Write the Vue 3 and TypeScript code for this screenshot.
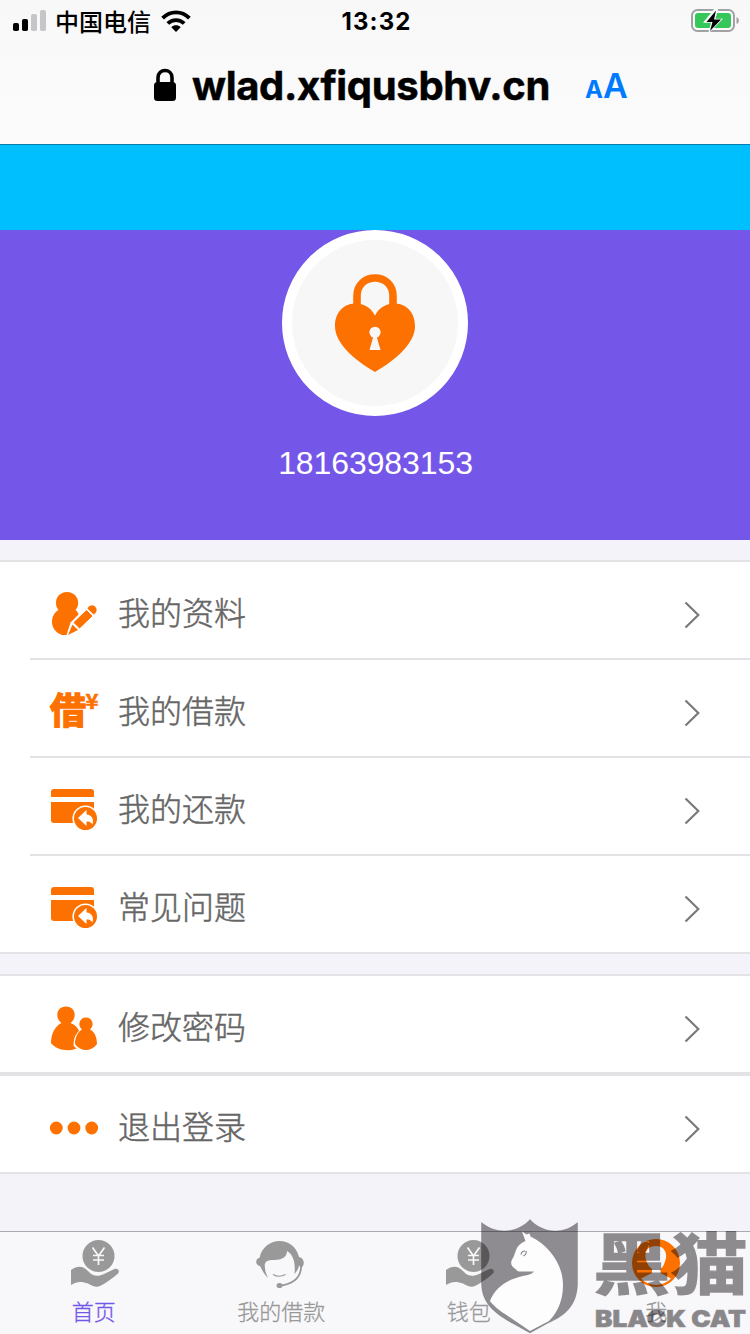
<script setup lang="ts">
interface Row {
  label: string
  icon: 'profile' | 'loan' | 'card' | 'people' | 'dots'
}

interface Tab {
  label: string
  icon: 'hand' | 'service' | 'me'
  active?: boolean
}

const mainRows: Row[] = [
  { label: '我的资料', icon: 'profile' },
  { label: '我的借款', icon: 'loan' },
  { label: '我的还款', icon: 'card' },
  { label: '常见问题', icon: 'card' },
]

const accountRows: Row[] = [
  { label: '修改密码', icon: 'people' },
  { label: '退出登录', icon: 'dots' },
]

const groups: { name: string; rows: Row[] }[] = [
  { name: 'main', rows: mainRows },
  { name: 'account', rows: accountRows },
]

const tabs: Tab[] = [
  { label: '首页', icon: 'hand', active: true },
  { label: '我的借款', icon: 'service' },
  { label: '钱包', icon: 'hand' },
  { label: '我', icon: 'me' },
]
</script>

<template>
  <div class="screen">
    <header class="browser">
      <div class="status">
        <div class="carrier">
          <svg class="signal" width="34" height="22" viewBox="0 0 34 22">
            <rect x="0" y="13" width="6" height="8" rx="1.8" />
            <rect x="9" y="9" width="6" height="12" rx="1.8" />
            <rect x="18" y="4" width="6" height="17" rx="1.8" fill="#c6c6c8" />
            <rect x="27" y="0" width="6" height="21" rx="1.8" fill="#c6c6c8" />
          </svg>
          <span class="carrier-name">中国电信</span>
          <svg class="wifi" width="30" height="22" viewBox="0 0 30 22">
            <g fill="none" stroke="#000" stroke-width="3.8">
              <path d="M1.6 8.2C9.2.4 20.8.4 28.4 8.2" />
              <path d="M6.800 13.500C11.500 9 18.500 9 23.200 13.500" />
            </g>
            <path d="M10.300 17.200C13 14.700 17 14.700 19.700 17.200L15 22Z" />
          </svg>
        </div>
        <span class="clock">13:32</span>
        <svg class="battery" width="50" height="26" viewBox="0 0 50 26">
          <rect x="2" y="2" width="42" height="21" rx="5.500" fill="#fbfbfb" stroke="#a2a2a4" stroke-width="2" />
          <rect x="5" y="5" width="36" height="15" rx="3" fill="#35c759" />
          <path d="M46.500 9Q49 10 49 12.500T46.500 16Z" fill="#a2a2a4" />
          <path d="M25 0 13 14.800H21L18 26 33 10.800H25.500L28.500 0Z" fill="#fbfbfb" />
          <path d="M26 2.500 16.500 14H22.500L20 23 31 11.500H24Z" />
        </svg>
      </div>
      <div class="address">
        <svg class="padlock" width="24" height="34" viewBox="0 0 24 34">
          <rect x="1" y="14" width="22" height="19" rx="3.500" />
          <path d="M5 16V9.500C5 .2 19 .2 19 9.500V16" fill="none" stroke="#000" stroke-width="3.600" />
        </svg>
        <span class="domain">wlad.xfiqusbhv.cn</span>
        <span class="reader"><small>A</small><b>A</b></span>
      </div>
    </header>

    <div class="title-bar"></div>

    <section class="hero">
      <div class="avatar">
        <svg width="80" height="100" viewBox="0 0 80 100">
          <path d="M22 36V22C22-2 58-2 58 22V36" fill="none" stroke="#fd7100" stroke-width="7.600" />
          <path d="M40 41.500C35 32 27 29.500 20 29.500C7 30 0 40 0 52C0 69 18 85 40 98C62 85 80 69 80 52C80 40 73 30 60 29.500C53 29.500 45 32 40 41.500Z" fill="#fd7100" />
          <circle cx="40" cy="58.300" r="5.600" fill="#f7f7f7" />
          <path d="M38.800 61H41.200L45.500 76H34.500Z" fill="#f7f7f7" />
        </svg>
      </div>
      <p class="phone">18163983153</p>
    </section>

    <main>
      <ul v-for="group in groups" :key="group.name" class="group" :class="group.name">
        <li v-for="row in group.rows" :key="row.label" class="row">
          <svg class="row-icon" width="48" height="48" viewBox="0 0 48 48" fill="#fd7100">
            <g v-if="row.icon === 'profile'">
              <path d="M17 2C24 2 28.200 7 28.200 13C28.200 16 27 18 25.500 20C27 21 28 22.500 28.500 24.500L20.500 32.500L16.500 45H12C6 43 2 38 2 32C2 26 5 22 8.500 20C7 18 6 16 6 13C6 7 10 2 17 2Z" />
              <path d="M24 32.500 36.500 20.500 42 26 29.500 38Z" stroke="#fd7100" stroke-width="1" />
              <path d="M37.500 18.500A4.700 4.700 0 1 1 43.500 24.500Z" />
              <path d="M22.500 34.500 28 40 18 45Z" />
            </g>
            <g v-else-if="row.icon === 'loan'" class="loan-mark">
              <text transform="translate(0 35.500) scale(1 .95)" font-size="38" textLength="36" lengthAdjust="spacingAndGlyphs" stroke="#fd7100" stroke-width="1.600">借</text>
              <text x="35.500" y="20.500" font-size="21" textLength="13" lengthAdjust="spacingAndGlyphs" stroke="#fd7100" stroke-width=".5">¥</text>
            </g>
            <g v-else-if="row.icon === 'card'">
              <path d="M4 3H41Q44 3 44 6V11H1V6Q1 3 4 3Z" />
              <path d="M1 16H44V37H4Q1 37 1 34Z" />
              <circle cx="35.500" cy="32.500" r="12.300" stroke="#fff" stroke-width="1.600" />
              <path d="M28 32 36.500 24V28.500C42 29 44 33 42.500 38.500C41 36 39 35.500 36.500 35.500V40Z" fill="#fff" />
            </g>
            <g v-else-if="row.icon === 'people'">
              <path d="M1 39C1 30 5 22 11.500 19C4.500 14 6.500 2.500 16 2.500C25.500 2.500 27.500 14 20.500 19C29 22 32 31 31 42C24 48 8 48 1 39Z" />
              <path d="M25 41C25 33 28 29 32 26.500C26 22 30 13.500 36 13.500C42 13.500 45 22 40 26.500C45 29 47 34 47 40C41 48 31 48 25 41Z" stroke="#fff" stroke-width="3" />
              <path d="M25 40C25 33 28 28 32 25.500C27 21.500 29.500 13.500 36 13.500C42.500 13.500 45 21.500 40 25.500C45 28 47 34 47 40C41 48 31 48 25 40Z" />
            </g>
            <g v-else>
              <circle cx="6.300" cy="24" r="6.400" /><circle cx="24" cy="24" r="6.400" /><circle cx="41.700" cy="24" r="6.400" />
            </g>
          </svg>
          <span class="row-label">{{ row.label }}</span>
          <svg class="chevron" width="18" height="28" viewBox="0 0 18 28">
            <path d="M2.500 1.500 15.300 14 2.500 26.500" fill="none" stroke="#7a7a7a" stroke-width="2.200" />
          </svg>
        </li>
      </ul>
    </main>

    <nav class="tabs">
      <div v-for="tab in tabs" :key="tab.label" class="tab" :class="{ active: tab.active }">
        <svg class="tab-icon" :class="tab.icon" width="48" height="48" viewBox="0 0 48 48" fill="#999">
          <g v-if="tab.icon === 'hand'">
            <circle cx="27.500" cy="16" r="16" />
            <path d="M21.500 7.500 27.500 16 33.500 7.500M27.500 16V25M22 15.500H33M22 20H33" fill="none" stroke="#f8f8fb" stroke-width="1.700" />
            <path d="M0 30C7 25 12 26 17 31C22 36.500 27 37 33 34L43 29.200C46 27.500 49.500 30.500 47 33.500C42 38 35 43 29 46C25 48 21 45.500 17 43.500C11 41.500 6 41 0 45Z" />
          </g>
          <g v-else-if="tab.icon === 'service'">
            <path d="M3.500 18C8-4 38-5 43 17C49 18 49 26 45 28L43 25.500C42.500 28.500 41 31 38.500 34C39.500 24 38 15 31 11C31 17 26 20 18 20C10 20 8 22 9 28C9 32 11 35 12 38C8 34 6 30 4 26C-1 26-1 18 3.500 18Z" />
            <path d="M45 24C46 37 38 44 23 46" fill="none" stroke="#999" stroke-width="1.800" />
            <ellipse cx="23.500" cy="45.500" rx="3" ry="2.600" />
            <path d="M17 34.500Q23 38 29.500 34.500" fill="none" stroke="#999" stroke-width="1.200" />
          </g>
          <g v-else>
            <circle cx="24" cy="24" r="24" fill="#fd7100" />
            <path d="M24 7C31 7 35 12 34 19C33 24 31 28 28.500 30V34L39 39.500C31 48 17 48 9 39.500L20 34V30C17 28 14 23 13.500 18C13 11 17 7 24 7Z" fill="#f8f8fb" />
          </g>
        </svg>
        <span class="tab-label">{{ tab.label }}</span>
      </div>
    </nav>

    <svg class="watermark" width="270" height="118" viewBox="480 1216 270 118">
      <path d="M481.500 1222.500C498 1236 519 1232 530 1219.500C541 1232 562 1236 577.500 1222.500V1284C577 1304 567 1315 548 1323L530 1333L512 1323C490 1311 482 1300 481.500 1284Z" fill="#080308" fill-opacity=".44" stroke="#080308" stroke-opacity=".15" />
      <path d="M522 1231.500 526.500 1234.500 529.500 1233.500 530.500 1236.500C550 1246 563 1265 563 1285C563 1300 558 1312 549 1321L530 1331L505 1314C497 1309 492 1304 490 1301C496 1286 509 1279 523 1276C529 1275 532 1274 534 1271.500L519 1271.500C517 1271 516 1269 513.500 1267.500C511 1265.500 510 1262 513 1258C516 1253 515 1245 525.500 1241Z" fill="#fdfdfd" />
      <path d="M521 1254.500C521.500 1251.500 523 1251 525 1251M523.500 1256C525.500 1255 526.500 1253 526 1251" fill="none" stroke="#858287" stroke-width="1.200" />
      <g class="watermark-name">
        <text transform="translate(593 1288.500) scale(1 .88)" font-size="76" textLength="155" lengthAdjust="spacingAndGlyphs">黑猫</text>
      </g>
      <text class="watermark-latin" x="595" y="1326.500" textLength="151" lengthAdjust="spacingAndGlyphs">BLACK CAT</text>
    </svg>
  </div>
</template>

<style>
body {
  margin: 0;
}
</style>

<style scoped>
.screen {
  position: relative;
  display: flex;
  flex-direction: column;
  width: 750px;
  height: 1334px;
  overflow: hidden;
  background: #f4f3f9;
  font-family: "Liberation Sans", "Noto Sans CJK SC", sans-serif;
}
.browser {
  box-sizing: border-box;
  height: 145px;
  background: linear-gradient(#f8f8f8, #fbfbfc);
  border-bottom: 1px solid #087fa8;
}
.status {
  display: grid;
  grid-template-columns: 1fr auto 1fr;
  align-items: center;
  height: 38px;
  padding: 0 10px 0 13px;
}
.carrier {
  display: flex;
  align-items: center;
}
.signal {
  margin-top: -1px;
}
.carrier-name {
  margin-left: 8px;
  font: 500 24px/40px "Noto Sans CJK SC", sans-serif;
}
.wifi {
  margin-left: 10px;
}
.clock {
  padding-top: 2px;
  font: 700 24px/40px Inter, sans-serif;
  letter-spacing: 1.1px;
}
.battery {
  justify-self: end;
}
.address {
  display: flex;
  align-items: center;
  height: 94px;
  padding-left: 153px;
}
.padlock {
  margin-top: -1px;
}
.domain {
  width: 358px;
  margin-left: 15px;
  padding-top: 2px;
  font: 700 40px/90px Inter, sans-serif;
  letter-spacing: -.33px;
  white-space: nowrap;
  -webkit-text-stroke: .5px #000;
}
.reader {
  display: flex;
  align-items: baseline;
  margin-left: 35px;
  padding-top: 5px;
  color: #007aff;
  font: 600 34px/90px Inter, sans-serif;
}
.reader small {
  font-size: 24px;
  font-weight: 700;
}
.reader b {
  font-weight: 600;
}
.title-bar {
  height: 85px;
  background: #00bfff;
}
.hero {
  display: flex;
  flex-direction: column;
  align-items: center;
  height: 310px;
  background: #7456e9;
}
.avatar {
  box-sizing: border-box;
  display: flex;
  justify-content: center;
  width: 186px;
  height: 186px;
  padding-top: 34px;
  border: 10px solid #fff;
  border-radius: 50%;
  background: #f7f7f7;
}
.phone {
  margin: 29px 0 0 1px;
  color: #fff;
  font-size: 32px;
  line-height: 36px;
  letter-spacing: -.1px;
}
.group {
  margin: 20px 0 0;
  padding: 0;
  list-style: none;
  border-top: 2px solid #e3e3e5;
  border-bottom: 2px solid #e3e3e5;
  background: #fff;
}
.row {
  display: flex;
  align-items: center;
  height: 96px;
  margin-left: 30px;
  padding: 0 49px 0 20px;
}
.row + .row {
  border-top: 2px solid #e3e3e5;
}
.account .row {
  margin-left: 0;
  padding-left: 50px;
}
.account .row + .row {
  border-top-width: 4px;
}
.row-icon {
  margin-top: 8px;
  overflow: visible;
}
.loan-mark {
  font-family: "Noto Sans CJK SC", sans-serif;
  font-weight: 700;
}
.row-label {
  flex: 1;
  margin-left: 20px;
  padding-top: 2px;
  color: #666;
  font: 300 32px/48px "Noto Sans CJK SC", sans-serif;
  -webkit-text-stroke: .5px #666;
}
.chevron {
  margin-top: 9px;
}
.tabs {
  display: flex;
  box-sizing: border-box;
  height: 103px;
  margin-top: auto;
  border-top: 1px solid #aaa9ad;
  background: #f8f8fb;
}
.tab {
  display: flex;
  flex: 1;
  flex-direction: column;
  align-items: center;
  padding-top: 8px;
  color: #999;
}
.active {
  color: #7456e9;
}
.tab-icon.hand {
  margin-left: 3px;
}
.tab-icon.service {
  margin-left: -2px;
}
.tab-icon.me {
  margin-top: -1px;
  margin-bottom: 1px;
}
.tab-label {
  margin-top: 6px;
  font: 300 22px/32px "Noto Sans CJK SC", sans-serif;
  -webkit-text-stroke: .3px currentColor;
}
.watermark {
  position: absolute;
  right: 0;
  bottom: 0;
  overflow: visible;
}
.watermark-name {
  opacity: .44;
  fill: #080308;
  font-family: "Noto Sans CJK SC", sans-serif;
  font-weight: 700;
  stroke: #080308;
  stroke-width: 1.5px;
}
.watermark-latin {
  opacity: .46;
  fill: #080308;
  stroke: #080308;
  stroke-width: .6px;
  font: 900 22.5px Inter, sans-serif;
}
</style>
